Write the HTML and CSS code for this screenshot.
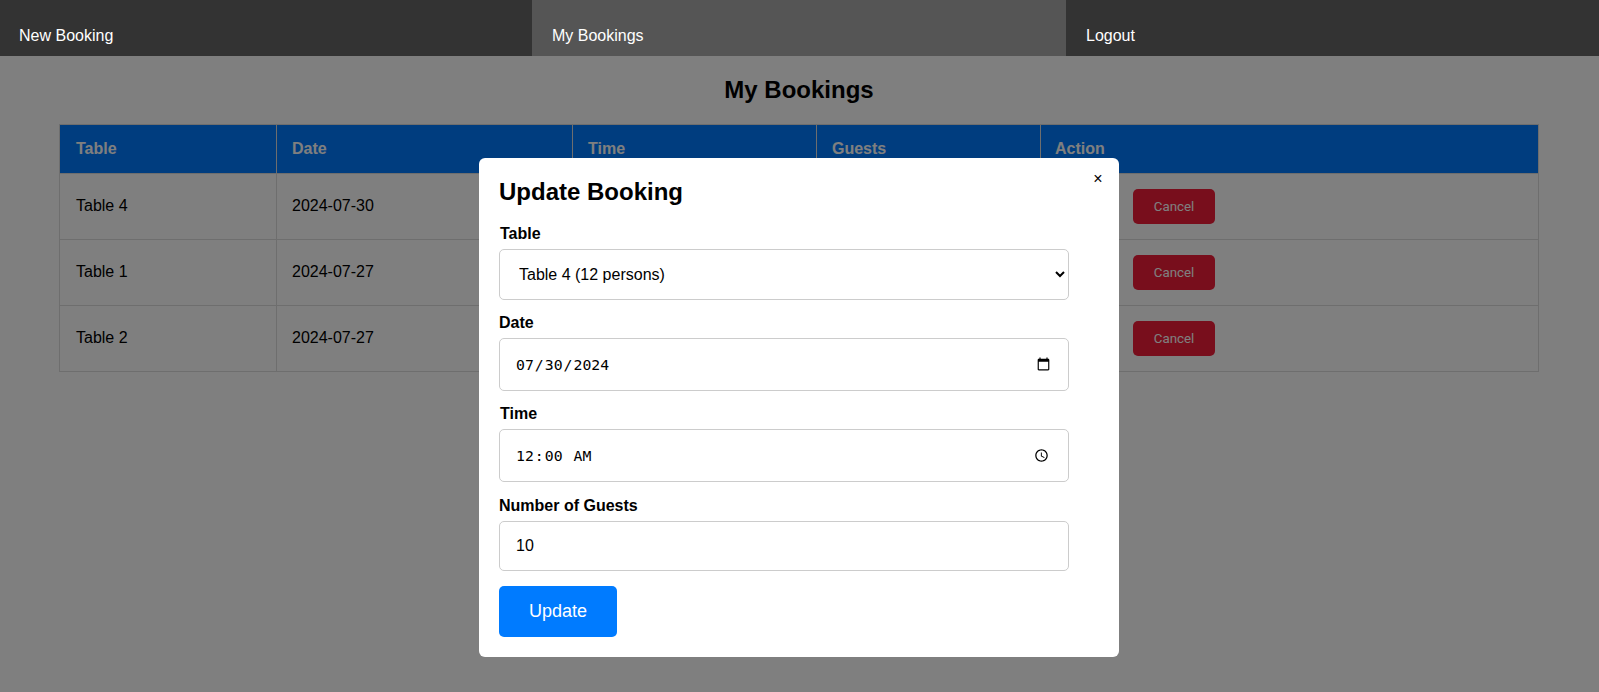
FILE: index.html
```html
<!DOCTYPE html>
<html lang="en">
<head>
<meta charset="utf-8">
<title>My Bookings</title>
<link rel="stylesheet" href="styles.css">
</head>
<body>
<nav class="nav">
  <a class="nav-item">New Booking</a>
  <a class="nav-item active">My Bookings</a>
  <a class="nav-item">Logout</a>
</nav>
<main class="content">
  <h2 class="page-title">My Bookings</h2>
  <table class="bookings">
    <colgroup><col class="c1"><col class="c2"><col class="c3"><col class="c4"><col class="c5"></colgroup>
    <thead><tr><th>Table</th><th>Date</th><th>Time</th><th>Guests</th><th>Action</th></tr></thead>
    <tbody>
      <tr><td>Table 4</td><td>2024-07-30</td><td>00:00:00</td><td>10</td><td class="actions"><button class="btn-cancel">Cancel</button></td></tr>
      <tr><td>Table 1</td><td>2024-07-27</td><td>00:00:00</td><td>2</td><td class="actions"><button class="btn-cancel">Cancel</button></td></tr>
      <tr><td>Table 2</td><td>2024-07-27</td><td>00:00:00</td><td>2</td><td class="actions"><button class="btn-cancel">Cancel</button></td></tr>
    </tbody>
  </table>
</main>
<div class="overlay">
  <div class="modal">
    <button class="close">×</button>
    <h2 class="modal-title">Update Booking</h2>
    <form class="form">
      <label class="label l-table" for="t">Table</label>
      <select id="t" class="field f-select"><option>Table 4 (12 persons)</option></select>
      <label class="label" for="d">Date</label>
      <input id="d" class="field f-mono f-date" type="date" value="2024-07-30">
      <label class="label l-table" for="m">Time</label>
      <input id="m" class="field f-mono f-time" type="time" value="00:00">
      <label class="label" for="g">Number of Guests</label>
      <input id="g" class="field f-num" type="text" value="10">
      <button type="button" class="btn-update">Update</button>
    </form>
  </div>
</div>
</body>
</html>
```
FILE: styles.css
```css
* { box-sizing: border-box; }
html, body { margin: 0; height: 100%; }
body { font-family: "Liberation Sans", Arial, sans-serif; background: #fff; color: #000; overflow: hidden; }
.nav { position: relative; z-index: 20; display: grid; grid-template-columns: 532px 534px 533px; height: 56px; background: #333; }
.nav-item { display: flex; align-items: flex-end; padding: 0 20px 10px 19px; color: #fff; font-size: 16px; line-height: 20px; }
.nav-item.active { background: #555; padding-left: 20px; }
.nav-item:last-child { padding-left: 20px; }
.content { padding: 0 60px 0 59px; }
.page-title { margin: 20px 0 20px; text-align: center; font-size: 24px; line-height: 28px; font-weight: bold; }
.bookings { width: 100%; border-collapse: collapse; table-layout: fixed; font-size: 16px; }
.c1 { width: 217px; } .c2 { width: 296px; } .c3 { width: 244px; } .c4 { width: 224px; }
.bookings th, .bookings td { border: 1px solid #ddd; padding: 15px; text-align: left; }
.bookings td { padding-top: 14px; padding-bottom: 16px; }
.bookings th { background: #007bff; color: #fff; height: 49px; font-weight: bold; }
.bookings th:first-child, .bookings td:first-child { padding-left: 16px; }
.bookings th:last-child { padding-left: 14px; }
.bookings td { height: 66px; }
.bookings td.actions { padding: 15px 15px 15px 92px; }
.btn-cancel { width: 82px; height: 35px; background: #f01c38; color: #fff; border: 0; border-radius: 5px; font-family: Roboto, sans-serif; font-size: 13.33px; }
.overlay { position: fixed; inset: 0; z-index: 10; background: rgba(0,0,0,.5); }
.modal { position: absolute; left: 479px; top: 158px; width: 640px; height: 499px; padding: 20px; background: #fff; border-radius: 6px; }
.close { position: absolute; top: 11px; right: 11px; width: 20px; height: 20px; padding: 0; border: 0; background: none; color: #000; font-size: 16px; line-height: 20px; font-family: "Liberation Sans", sans-serif; }
.modal-title { margin: 0 0 19px; font-size: 24px; line-height: 28px; }
.form { width: 570px; display: flex; flex-direction: column; align-items: flex-start; }
.label { font-size: 16px; font-weight: bold; line-height: 18px; margin-bottom: 6px; }
.l-table { margin-left: 1px; }
.field { width: 570px; border: 1px solid #ccc; border-radius: 5px; background: #fff; color: #000; font-size: 16px; padding: 0 15px; margin-bottom: 14px; font-family: "Liberation Sans", sans-serif; }
.f-select { height: 51px; }
.f-date { height: 53px; }
.f-time { height: 53px; margin-bottom: 15px; }
.f-num { height: 50px; margin-bottom: 15px; padding-left: 16px; }
.f-mono { font-family: "DejaVu Sans Mono", monospace; font-size: 14.8px; }
.btn-update { width: 118px; height: 51px; border: 0; border-radius: 5px; background: #007bff; color: #fff; font-size: 18px; font-family: "Liberation Sans", sans-serif; }
```
